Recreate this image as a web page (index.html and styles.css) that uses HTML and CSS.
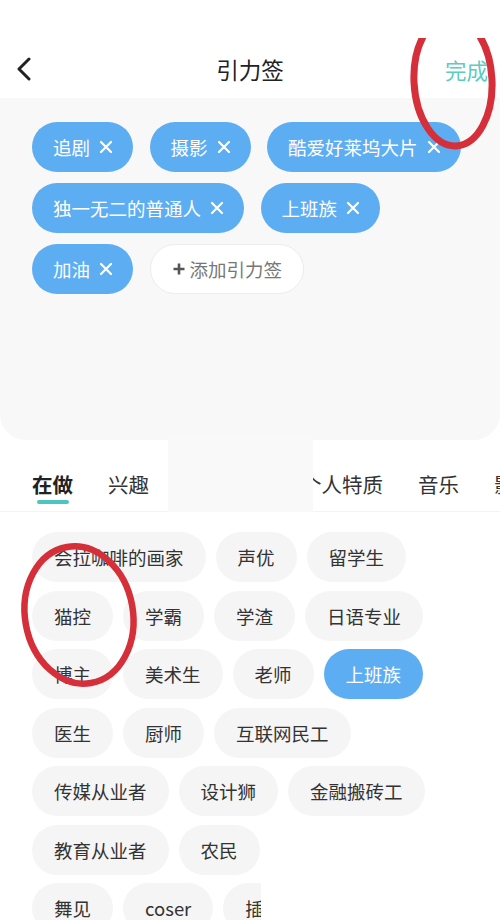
FILE: index.html
```html
<!DOCTYPE html>
<html lang="zh-CN">
<head>
<meta charset="utf-8">
<title>引力签</title>
<link rel="stylesheet" href="styles.css">
</head>
<body>
<div class="screen">
  <div class="status"></div>

  <header class="nav">
    <button class="nav-back" aria-label="返回">
      <svg width="16" height="24" viewBox="0 0 16 24"><path d="M13 2 L3 12 L13 22" fill="none" stroke="#222" stroke-width="3" stroke-linecap="round" stroke-linejoin="round"/></svg>
    </button>
    <h1 class="nav-title">引力签</h1>
    <span class="nav-done">完成</span>
  </header>

  <section class="mine">
    <div class="mine-list">
      <span class="tag">追剧<svg class="tag-x" viewBox="0 0 14 14"><path d="M2 2 L12 12 M12 2 L2 12"/></svg></span>
      <span class="tag">摄影<svg class="tag-x" viewBox="0 0 14 14"><path d="M2 2 L12 12 M12 2 L2 12"/></svg></span>
      <span class="tag">酷爱好莱坞大片<svg class="tag-x" viewBox="0 0 14 14"><path d="M2 2 L12 12 M12 2 L2 12"/></svg></span>
      <span class="tag">独一无二的普通人<svg class="tag-x" viewBox="0 0 14 14"><path d="M2 2 L12 12 M12 2 L2 12"/></svg></span>
      <span class="tag">上班族<svg class="tag-x" viewBox="0 0 14 14"><path d="M2 2 L12 12 M12 2 L2 12"/></svg></span>
      <span class="tag">加油<svg class="tag-x" viewBox="0 0 14 14"><path d="M2 2 L12 12 M12 2 L2 12"/></svg></span>
      <span class="tag-add"><svg class="tag-plus" viewBox="0 0 12 12"><path d="M6 0.5 V11.5 M0.5 6 H11.5"/></svg>添加引力签</span>
    </div>
  </section>

  <nav class="tabs">
    <span class="tab tab-active">在做</span>
    <span class="tab">兴趣</span>
    <span class="tab">生活态度</span>
    <span class="tab">个人特质</span>
    <span class="tab">音乐</span>
    <span class="tab">影视</span>
    <span class="tab">游戏</span>
  </nav>

  <section class="pool">
    <span class="chip">会拉咖啡的画家</span>
    <span class="chip">声优</span>
    <span class="chip">留学生</span>
    <span class="chip">猫控</span>
    <span class="chip">学霸</span>
    <span class="chip">学渣</span>
    <span class="chip">日语专业</span>
    <span class="chip">博主</span>
    <span class="chip">美术生</span>
    <span class="chip">老师</span>
    <span class="chip chip-on">上班族</span>
    <span class="chip">医生</span>
    <span class="chip">厨师</span>
    <span class="chip">互联网民工</span>
    <span class="chip">传媒从业者</span>
    <span class="chip">设计狮</span>
    <span class="chip">金融搬砖工</span>
    <span class="chip">教育从业者</span>
    <span class="chip">农民</span>
    <span class="chip">自由职业者</span>
    <span class="chip">舞见</span>
    <span class="chip">coser</span>
    <span class="chip">插画师</span>
    <span class="chip">程序员</span>
  </section>

  <!-- blanked-out regions laid over the page -->
  <div class="blank blank-tabs"></div>
  <div class="blank blank-row"></div>
  <div class="blank blank-foot"></div>

  <!-- hand-drawn red rings laid over the page -->
  <svg class="ring ring-done" width="110" height="120" viewBox="0 0 110 120">
    <ellipse cx="53" cy="43" rx="39" ry="65" transform="rotate(-3 53 43)"/>
  </svg>
  <svg class="ring ring-cat" width="140" height="170" viewBox="0 0 140 170">
    <ellipse cx="70" cy="85" rx="54" ry="69" transform="rotate(-10 70 85)"/>
  </svg>
</div>
</body>
</html>
```

FILE: styles.css
```css
* {
  box-sizing: border-box;
}

html,
body {
  margin: 0;
  padding: 0;
  background: #ffffff;
}

body {
  font-family: "Noto Sans CJK SC", "Noto Sans", sans-serif;
  color: #222;
}

.screen {
  position: relative;
  width: 500px;
  height: 920px;
  overflow: hidden;
  background: #ffffff;
}

.status {
  height: 40px;
}

/* top navigation */
.nav {
  position: relative;
  height: 58px;
  display: flex;
  align-items: center;
  justify-content: space-between;
  padding: 0 12px 0 16px;
}

.nav-back {
  border: 0;
  background: none;
  padding: 0;
  width: 18px;
  height: 24px;
  display: flex;
  align-items: center;
}

.nav-title {
  position: absolute;
  left: 0;
  right: 0;
  margin: 0;
  text-align: center;
  font-size: 22.5px;
  font-weight: 400;
  color: #222;
  pointer-events: none;
}

.nav-done {
  font-size: 21.5px;
  color: #5ccbc2;
}

/* selected tags panel */
.mine {
  height: 342px;
  background: #f8f8f8;
  border-radius: 0 0 26px 26px;
  padding: 24px 32px;
}

.mine-list {
  display: flex;
  flex-wrap: wrap;
  gap: 11px 16.5px;
}

.tag {
  height: 50px;
  display: inline-flex;
  align-items: center;
  gap: 9px;
  padding: 0 20px 0 21px;
  border-radius: 25px;
  background: #5dadf3;
  color: #ffffff;
  font-size: 18.5px;
  white-space: nowrap;
}

.tag-x {
  width: 14px;
  height: 14px;
  fill: none;
  stroke: #ffffff;
  stroke-width: 2.2;
  stroke-linecap: round;
}

.tag-add {
  height: 50px;
  display: inline-flex;
  align-items: center;
  gap: 5px;
  padding: 0 21px 0 22px;
  border-radius: 25px;
  background: #ffffff;
  border: 1px solid #ececec;
  color: #777;
  font-size: 18.5px;
  white-space: nowrap;
}

.tag-plus {
  width: 12px;
  height: 12px;
  fill: none;
  stroke: #555;
  stroke-width: 2.6;
}

/* category tabs */
.tabs {
  height: 72px;
  display: flex;
  gap: 35px;
  padding: 30px 0 0 32px;
  white-space: nowrap;
  border-bottom: 1px solid #f4f4f4;
}

.tab {
  flex: none;
  font-size: 20.5px;
  line-height: 28px;
  height: 34px;
  color: #333;
}

.tab-active {
  position: relative;
  font-weight: 700;
  color: #222;
}

.tab-active::after {
  content: "";
  position: absolute;
  left: 50%;
  top: 30px;
  width: 32px;
  height: 4px;
  margin-left: -16px;
  border-radius: 2px;
  background: #4cc5c2;
}

/* tag pool */
.pool {
  display: flex;
  flex-wrap: wrap;
  gap: 8.5px 10px;
  padding: 20px 32px;
}

.chip {
  height: 50px;
  display: inline-flex;
  align-items: center;
  padding: 0 22px;
  border-radius: 25px;
  background: #f5f5f5;
  color: #333;
  font-size: 18.5px;
  white-space: nowrap;
}

.chip-on {
  background: #5dadf3;
  color: #ffffff;
}

/* blanked regions */
.blank {
  position: absolute;
}

.blank-tabs {
  left: 168px;
  top: 436px;
  width: 145px;
  height: 76px;
  background: #f9f9f9;
}

.blank-row {
  left: 263px;
  top: 820px;
  right: 0;
  height: 58px;
  background: #ffffff;
}

.blank-foot {
  left: 261px;
  top: 878px;
  right: 0;
  bottom: 0;
  background: #ffffff;
}

/* red rings */
.ring {
  position: absolute;
  fill: none;
  stroke: #d52f3a;
  overflow: hidden;
}

.ring-done {
  left: 400px;
  top: 38px;
  stroke-width: 7;
}

.ring-cat {
  left: 9px;
  top: 530px;
  stroke-width: 6.5;
}
```
